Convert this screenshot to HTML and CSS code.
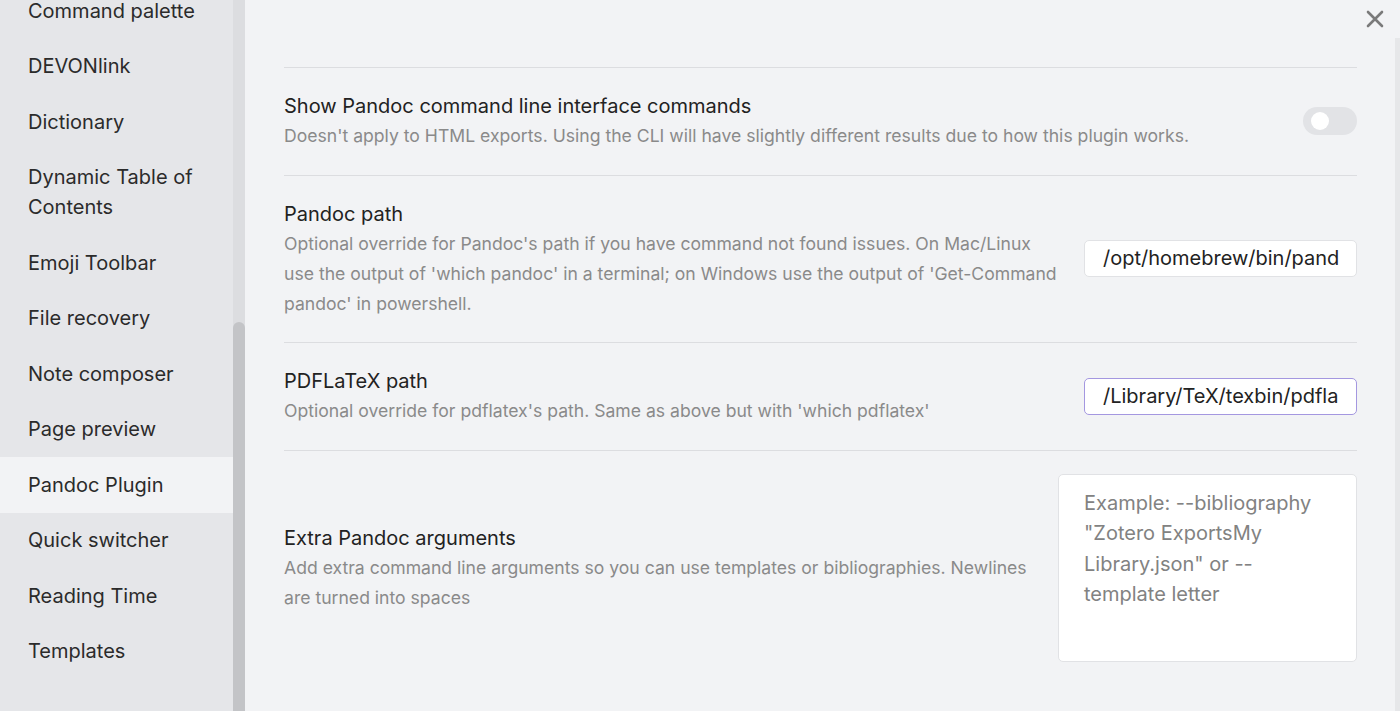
FILE: index.html
```html
<!DOCTYPE html>
<html>
<head>
<meta charset="utf-8">
<link rel="stylesheet" href="styles.css">
</head>
<body>
<div class="app">
  <aside class="sidebar">
    <nav class="nav">
      <div class="nav-item">Command palette</div>
      <div class="nav-item">DEVONlink</div>
      <div class="nav-item">Dictionary</div>
      <div class="nav-item">Dynamic Table of<br>Contents</div>
      <div class="nav-item">Emoji Toolbar</div>
      <div class="nav-item">File recovery</div>
      <div class="nav-item">Note composer</div>
      <div class="nav-item">Page preview</div>
      <div class="nav-item active">Pandoc Plugin</div>
      <div class="nav-item">Quick switcher</div>
      <div class="nav-item">Reading Time</div>
      <div class="nav-item">Templates</div>
    </nav>
    <div class="scrolltrack"><div class="scrollthumb"></div></div>
  </aside>
  <main class="main">
    <div class="close">
      <svg width="20" height="20" viewBox="0 0 20 20"><path d="M3 3 L17 17 M17 3 L3 17" stroke="#7a7a7a" stroke-width="2.6" stroke-linecap="round"/></svg>
    </div>
    <div class="content">
      <div class="setting top-spacer"></div>
      <div class="setting">
        <div class="info">
          <div class="name">Show Pandoc command line interface commands</div>
          <div class="desc">Doesn't apply to HTML exports. Using the CLI will have slightly different results due to how this plugin works.</div>
        </div>
        <div class="control">
          <div class="toggle"><div class="knob"></div></div>
        </div>
      </div>
      <div class="setting">
        <div class="info">
          <div class="name">Pandoc path</div>
          <div class="desc">Optional override for Pandoc's path if you have command not found issues. On Mac/Linux use the output of 'which pandoc' in a terminal; on Windows use the output of 'Get-Command pandoc' in powershell.</div>
        </div>
        <div class="control">
          <div class="input">/opt/homebrew/bin/pand</div>
        </div>
      </div>
      <div class="setting">
        <div class="info">
          <div class="name">PDFLaTeX path</div>
          <div class="desc">Optional override for pdflatex's path. Same as above but with 'which pdflatex'</div>
        </div>
        <div class="control">
          <div class="input focused">/Library/TeX/texbin/pdfla</div>
        </div>
      </div>
      <div class="setting last">
        <div class="info">
          <div class="name">Extra Pandoc arguments</div>
          <div class="desc">Add extra command line arguments so you can use templates or bibliographies. Newlines are turned into spaces</div>
        </div>
        <div class="control">
          <div class="textarea">Example: --bibliography "Zotero ExportsMy Library.json" or --template letter</div>
        </div>
      </div>
    </div>
    <div class="edge"></div>
  </main>
</div>
</body>
</html>
```
FILE: styles.css
```css
* { box-sizing: border-box; }
html, body { margin: 0; padding: 0; height: 100%; overflow: hidden; }
body {
  font-family: Inter, "Noto Sans", "Liberation Sans", sans-serif;
  background: #f2f3f5;
  color: #222;
}
.app { display: flex; height: 711px; }
.sidebar {
  width: 245px;
  flex: none;
  display: flex;
  background: #e5e6e9;
  overflow: hidden;
}
.nav {
  width: 233px;
  margin-top: -17px;
}
.nav-item {
  padding: 12.75px 10px 12.75px 28px;
  font-size: 20px;
  line-height: 30px;
  color: #2b2b2b;
}
.nav-item.active { background: #f2f3f5; }
.scrolltrack {
  width: 12px;
  background: #dcdde0;
  position: relative;
  display: flex;
  flex-direction: column;
  padding-top: 322px;
}
.scrollthumb {
  flex: 1;
  background: #c3c4c7;
  border-radius: 6px 6px 0 0;
}
.main {
  flex: 1;
  position: relative;
  background: #f2f3f5;
}
.close {
  position: absolute;
  right: 15px;
  top: 9px;
  width: 20px;
  height: 20px;
}
.close svg { display: block; }
.content {
  padding: 0 43px 0 39px;
}
.setting {
  display: flex;
  align-items: center;
  gap: 26px;
  padding: 23px 0 23.5px;
  border-bottom: 1px solid #dcdde0;
}
.setting.last { border-bottom: none; }
.top-spacer { height: 68px; padding: 0; }
.info { flex: 1; min-width: 0; }
.name {
  font-size: 20px;
  line-height: 30px;
  color: #222;
}
.desc {
  font-size: 17.6px;
  line-height: 30px;
  color: #8a8a8a;
}
.control { flex: none; display: flex; align-items: center; }
.toggle {
  width: 54px;
  height: 28px;
  border-radius: 14px;
  background: #e2e3e6;
  padding: 5px 0 0 8px;
}
.knob {
  width: 18px;
  height: 18px;
  border-radius: 50%;
  background: #fff;
}
.input {
  width: 273px;
  height: 37px;
  background: #fff;
  border: 1px solid #e1e2e5;
  border-radius: 5px;
  font-size: 20px;
  line-height: 35px;
  padding-left: 18px;
  color: #222;
  white-space: nowrap;
  overflow: hidden;
}
.input.focused { border-color: #a497e0; }
.textarea {
  width: 299px;
  height: 188px;
  background: #fff;
  border: 1px solid #e1e2e5;
  border-radius: 5px;
  font-size: 20px;
  line-height: 30.5px;
  padding: 13px 30px 0 25px;
  color: #828282;
}
.edge {
  position: absolute;
  right: 0;
  top: 38px;
  bottom: 0;
  width: 5px;
  background: #e6e7e9;
}
```
